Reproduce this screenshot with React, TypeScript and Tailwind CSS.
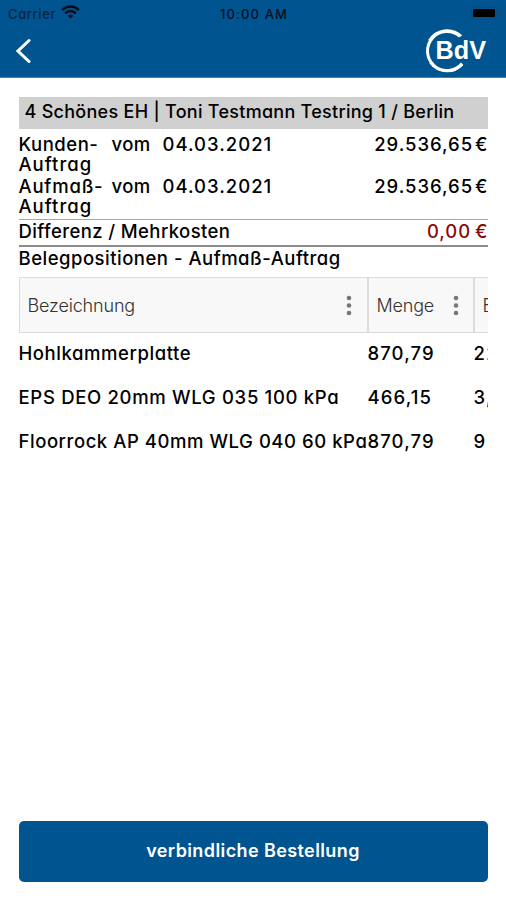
const orders = [
    { id: 1, name: 'Kunden-', date: '04.03.2021', amount: '29.536,65', nameClass: 'tracking-[0.5px]' },
    { id: 2, name: 'Aufmaß-', date: '04.03.2021', amount: '29.536,65', nameClass: 'tracking-[0.8px]' },
];

const positions = [
    { id: 1, name: 'Hohlkammerplatte', qty: '870,79', unit: '22', nameClass: 'tracking-[0.57px]', qtyClass: 'tracking-[1.1px]' },
    { id: 2, name: 'EPS DEO 20mm WLG 035 100 kPa', qty: '466,15', unit: '3,', nameClass: 'tracking-[0.68px]', qtyClass: 'tracking-[1.1px]' },
    { id: 3, name: 'Floorrock AP 40mm WLG 040 60 kPa', qty: '870,79', unit: '9', nameClass: 'tracking-[0.55px]', qtyClass: 'tracking-[1.1px]' },
];

function StatusBar() {
    return (
        <div className="grid grid-cols-3 items-center h-[27px] pl-2 pr-[6px] text-[13px] text-[#062441]">
            <div className="flex items-center gap-[5px]">
                <span className="tracking-[0.6px]">Carrier</span>
                <svg className="mb-[3px]" width="19" height="14" viewBox="0 0 19 14" fill="none" stroke="#020d18" strokeWidth="2.5">
                    <path d="M1.2 5.1C6 .3 13 .3 17.8 5.1" />
                    <path d="M4.2 8.3c3-3 7.6-3 10.6 0" />
                    <path d="M9.5 13.5L6.7 10.7c1.6-1.5 4-1.5 5.6 0z" fill="#020d18" stroke="none" />
                </svg>
            </div>
            <span className="text-center font-medium tracking-[1.1px] text-[#03101d]">10:00 AM</span>
            <svg className="justify-self-end mb-px" width="29" height="14" viewBox="0 0 29 14">
                <rect x="0.5" y="1" width="25" height="12" rx="3" fill="none" stroke="#084c80" />
                <rect x="2" y="3" width="22" height="8" rx="1" fill="#000" />
                <path d="M27 5v4c1.3-.6 1.3-3.4 0-4z" fill="#08406f" />
            </svg>
        </div>
    );
}

function Logo() {
    return (
        <svg width="64" height="48" viewBox="0 0 64 48" fill="none" stroke="#fff">
            <path d="M36 9.5A19.5 19.5 0 1 0 38 36.5" strokeWidth="3" />
            <path d="M37.500 9A21 21 0 0 0 5 13.500" strokeWidth="2" />
            <path d="M6 35.500A21 21 0 0 0 38.500 37.500" strokeWidth="2" />
            <text x="11.5" y="32" fontFamily="Liberation Sans" fontWeight="700" fontSize="26" textLength="50.5" lengthAdjust="spacingAndGlyphs" fill="#fff" stroke="#005590" strokeWidth="2" paintOrder="stroke">BdV</text>
        </svg>
    );
}

function ColumnMenu() {
    return (
        <svg width="6" height="22" viewBox="0 0 6 22" fill="#777">
            <circle cx="3" cy="3" r="2.3" />
            <circle cx="3" cy="10.5" r="2.3" />
            <circle cx="3" cy="18" r="2.3" />
        </svg>
    );
}

export default function App() {
    return (
        <div className="flex flex-col w-full h-[900px] overflow-hidden bg-white text-black font-[Inter,sans-serif] font-medium text-[18.5px] leading-5 [font-feature-settings:'cv11'] whitespace-nowrap">
            <header className="h-[78px] bg-[#005590] shrink-0 border-b border-[#4a83b0]">
                <StatusBar />
                <div className="flex items-center justify-between pl-4 pr-[18px] h-[48px]">
                    <svg width="16" height="26" viewBox="0 0 16 26" fill="none" stroke="#fff" strokeWidth="3" strokeLinecap="round">
                        <path d="M13 2.5L2 13l11 10.5" />
                    </svg>
                    <Logo />
                </div>
            </header>

            <main className="flex flex-col flex-1 mx-[18.5px] pt-[19px] pb-[18px]">
                <div className="h-8 bg-[#d0d0d0] flex items-center pl-[6px] pb-[2px] text-lg">
                    <span className="tracking-[0.28px]">4 Schönes EH | Toni Testmann Testring 1 / Berlin</span>
                </div>

                {/* Order totals */}
                <div className="pt-[5px] h-[91px] border-b border-[#a8a8a8]">
                    {orders.map((order) => (
                        <div key={order.id} className="flex h-[41.5px]">
                            <div className="w-[93px]">
                                <div className={order.nameClass}>{order.name}</div>
                                <div className="tracking-[1px]">Auftrag</div>
                            </div>
                            <span className="w-[51px] tracking-[0.4px]">vom</span>
                            <span className="tracking-[1px]">{order.date}</span>
                            <span className="ml-auto tracking-[0.95px]">{order.amount}<span className="ml-[2px] tracking-normal">€</span></span>
                        </div>
                    ))}
                </div>
                <div className="flex items-center justify-between h-[27px] pb-[3px] border-b-2 border-[#8c8c8c]">
                    <span className="tracking-[0.4px]">Differenz / Mehrkosten</span>
                    <span className="text-[#8b0a0a] tracking-[0.9px]">0,00<span className="ml-[4px] tracking-normal">€</span></span>
                </div>
                <div className="h-[30px] pt-px"><span className="tracking-[0.5px]">Belegpositionen - Aufmaß-Auftrag</span></div>

                {/* Positions table, runs off the right edge */}
                <div className="overflow-hidden">
                    <div className="flex w-[560px] h-[56px] bg-[#f8f8f8] border border-[#dcdcdc] font-light text-lg text-[#333]">
                        <div className="flex items-center justify-between w-[349px] pl-2 pr-[15px] pt-px border-r-2 border-[#dcdcdc]">
                            <span className="tracking-[-0.16px]">Bezeichnung</span>
                            <ColumnMenu />
                        </div>
                        <div className="flex items-center justify-between w-[106px] pl-2 pr-[14px] pt-px border-r-2 border-[#dcdcdc]">
                            <span className="tracking-[-0.2px]">Menge</span>
                            <ColumnMenu />
                        </div>
                        <div className="flex items-center pl-2 pt-px">Einheit</div>
                    </div>
                    <div className="-mt-[2px]">
                        {positions.map((pos) => (
                            <div key={pos.id} className="flex items-center w-[560px] h-11">
                                <span className={`w-[349px] ${pos.nameClass}`}>{pos.name}</span>
                                <span className={`w-[106px] ${pos.qtyClass}`}>{pos.qty}</span>
                                <span className="tracking-[1.3px]">{pos.unit}</span>
                            </div>
                        ))}
                    </div>
                </div>

                <button className="mt-auto h-[61px] pb-[2px] rounded-[5px] bg-[#005590] text-white text-lg font-semibold">
                    <span className="tracking-[0.4px]">verbindliche Bestellung</span>
                </button>
            </main>
        </div>
    );
}
